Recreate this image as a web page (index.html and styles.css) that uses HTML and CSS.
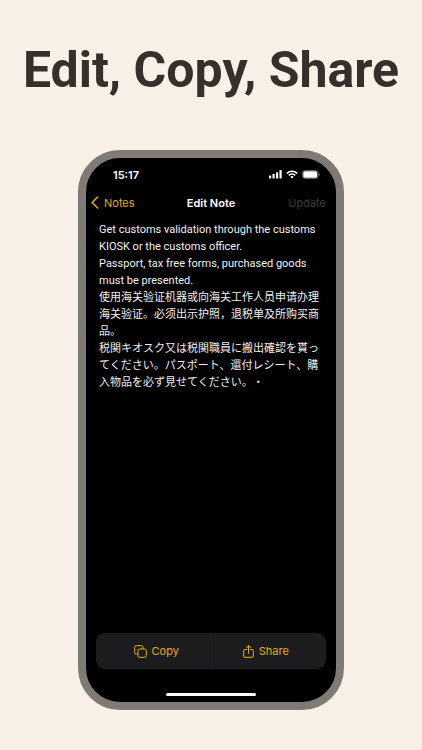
FILE: index.html
```html
<!DOCTYPE html>
<html lang="en">
<head>
  <meta charset="UTF-8">
  <title>Edit, Copy, Share</title>
  <meta name="viewport" content="width=device-width, initial-scale=1.0">
  <link rel="stylesheet" href="styles.css">
</head>
<body>
  <h1 class="headline">Edit, Copy, Share</h1>

  <main class="phone">
    <!-- Status bar -->
    <div class="status-bar">
      <span class="time">15:17</span>
      <div class="status-icons">
        <svg width="13" height="9" viewBox="0 0 13 9" fill="#fff" aria-hidden="true">
          <rect x="0" y="5.5" width="2.2" height="3" rx=".6"/>
          <rect x="3.5" y="4" width="2.2" height="4.5" rx=".6"/>
          <rect x="7" y="2.2" width="2.2" height="6.3" rx=".6"/>
          <rect x="10.5" y="0" width="2.2" height="8.5" rx=".6"/>
        </svg>
        <svg width="12" height="9" viewBox="0 0 12 9" fill="none" stroke="#fff" stroke-width="1.5" aria-hidden="true">
          <path d="M.9 3.4a7.2 7.2 0 0 1 10.2 0"/>
          <path d="M2.8 5.4a4.5 4.5 0 0 1 6.4 0"/>
          <path d="M6 8.5 4.3 6.8a2.4 2.4 0 0 1 3.4 0z" fill="#fff" stroke="none"/>
        </svg>
        <svg width="18" height="9" viewBox="0 0 18 9" aria-hidden="true">
          <rect x=".5" y=".5" width="15.5" height="8" rx="2.4" fill="none" stroke="#777" stroke-width=".8"/>
          <rect x="1.3" y="1.3" width="13.9" height="6.4" rx="1.5" fill="#fff"/>
          <path d="M16.8 3v3c.6-.2 1-.8 1-1.5s-.4-1.3-1-1.5z" fill="#777"/>
        </svg>
      </div>
    </div>

    <!-- Navigation -->
    <nav class="nav-bar">
      <a class="back" href="#notes">
        <svg width="8" height="13" viewBox="0 0 8 13" fill="none" stroke="currentColor" stroke-width="1.6" stroke-linecap="round" stroke-linejoin="round" aria-hidden="true">
          <path d="M6.7 1 1.2 6.5l5.5 5.5"/>
        </svg>
        Notes
      </a>
      <h2 class="title">Edit Note</h2>
      <button class="update" type="button" disabled>Update</button>
    </nav>

    <textarea class="note" aria-label="Note" spellcheck="false">Get customs validation through the customs KIOSK or the customs officer.
Passport, tax free forms, purchased goods must be presented.
使用海关验证机器或向海关工作人员申请办理海关验证。必须出示护照，退税单及所购买商品。
税関キオスク又は税関職員に搬出確認を貰ってください。パスポート、還付レシート、購入物品を必ず見せてください。・</textarea>

    <!-- Actions -->
    <div class="toolbar">
      <button class="action" type="button">
        <svg width="13" height="13" viewBox="0 0 13 13" fill="none" stroke="currentColor" stroke-width="1" aria-hidden="true">
          <path d="M4 9H2.2A1.5 1.5 0 0 1 .7 7.5V2.2A1.5 1.5 0 0 1 2.2.7h5.3A1.5 1.5 0 0 1 9 2.2V4"/>
          <rect x="4" y="4" width="8.3" height="8.3" rx="1.5"/>
        </svg>
        Copy
      </button>
      <button class="action" type="button">
        <svg width="11" height="13" viewBox="0 0 11 13" fill="none" stroke="currentColor" stroke-width="1" stroke-linecap="round" stroke-linejoin="round" aria-hidden="true">
          <path d="M3.5 4.5H2A1.3 1.3 0 0 0 .7 5.8v5.2A1.3 1.3 0 0 0 2 12.3h7a1.3 1.3 0 0 0 1.3-1.3V5.8A1.3 1.3 0 0 0 9 4.5H7.5"/>
          <path d="M5.5 8.3V.8M3.4 2.8 5.5.7l2.1 2.1"/>
        </svg>
        Share
      </button>
    </div>

    <div class="home-indicator"></div>
  </main>
</body>
</html>
```

FILE: styles.css
```css
* {
  margin: 0;
  padding: 0;
  box-sizing: border-box;
}

body {
  font-family: Inter, "Noto Sans CJK SC", sans-serif;
  background: #f9f1e8;
  min-height: 100vh;
  padding: 40px 0;
  display: flex;
  flex-direction: column;
}

button,
textarea {
  font: inherit;
  color: inherit;
  background: none;
  border: none;
}

.headline {
  color: #37302a;
  font-family: Roboto, sans-serif;
  font-size: 50px;
  font-weight: 700;
  line-height: 60px;
  text-align: center;
  white-space: nowrap;
  margin-bottom: 50px;
}

/* Phone */
.phone {
  flex: 1;
  display: flex;
  flex-direction: column;
  margin: 0 78px;
  border: 8px solid #807a74;
  border-radius: 42px;
  background: #000;
  color: #fff;
  font-size: 11px;
}

/* Status bar */
.status-bar {
  display: flex;
  justify-content: space-between;
  align-items: center;
  height: 33px;
  padding: 0 16px 0 27px;
}

.time {
  font-weight: 600;
}

.status-icons {
  display: flex;
  gap: 4px;
}

/* Navigation */
.nav-bar {
  display: grid;
  grid-template-columns: 1fr auto 1fr;
  align-items: center;
  height: 23px;
  padding: 0 10px;
}

.back {
  display: flex;
  align-items: center;
  gap: 5px;
  margin-left: -5px;
  color: #e0ae12;
  text-decoration: none;
}

.title {
  font-size: 11px;
  font-weight: 600;
}

.update {
  justify-self: end;
  color: #3c3c3e;
}

/* Note text */
.note {
  flex: 1;
  width: 100%;
  padding: 7px 12px 0 13px;
  font-family: Roboto, "Noto Sans CJK SC", sans-serif;
  line-height: 17px;
  text-spacing-trim: space-all;
  color: #f0f0f0;
  resize: none;
  outline: none;
  overflow: hidden;
}

/* Bottom actions */
.toolbar {
  display: flex;
  height: 36px;
  margin: 0 10px;
  padding: 0 6px;
  border-radius: 9px;
  background: #1c1c1e;
  color: #e0ae12;
}

.action {
  flex: 1;
  display: flex;
  align-items: center;
  justify-content: center;
  gap: 5px;
}

.action + .action {
  border-left: 1px solid #202022;
}

.home-indicator {
  width: 90px;
  height: 3px;
  margin: 24px auto 6px;
  border-radius: 2px;
  background: #fff;
}
```
